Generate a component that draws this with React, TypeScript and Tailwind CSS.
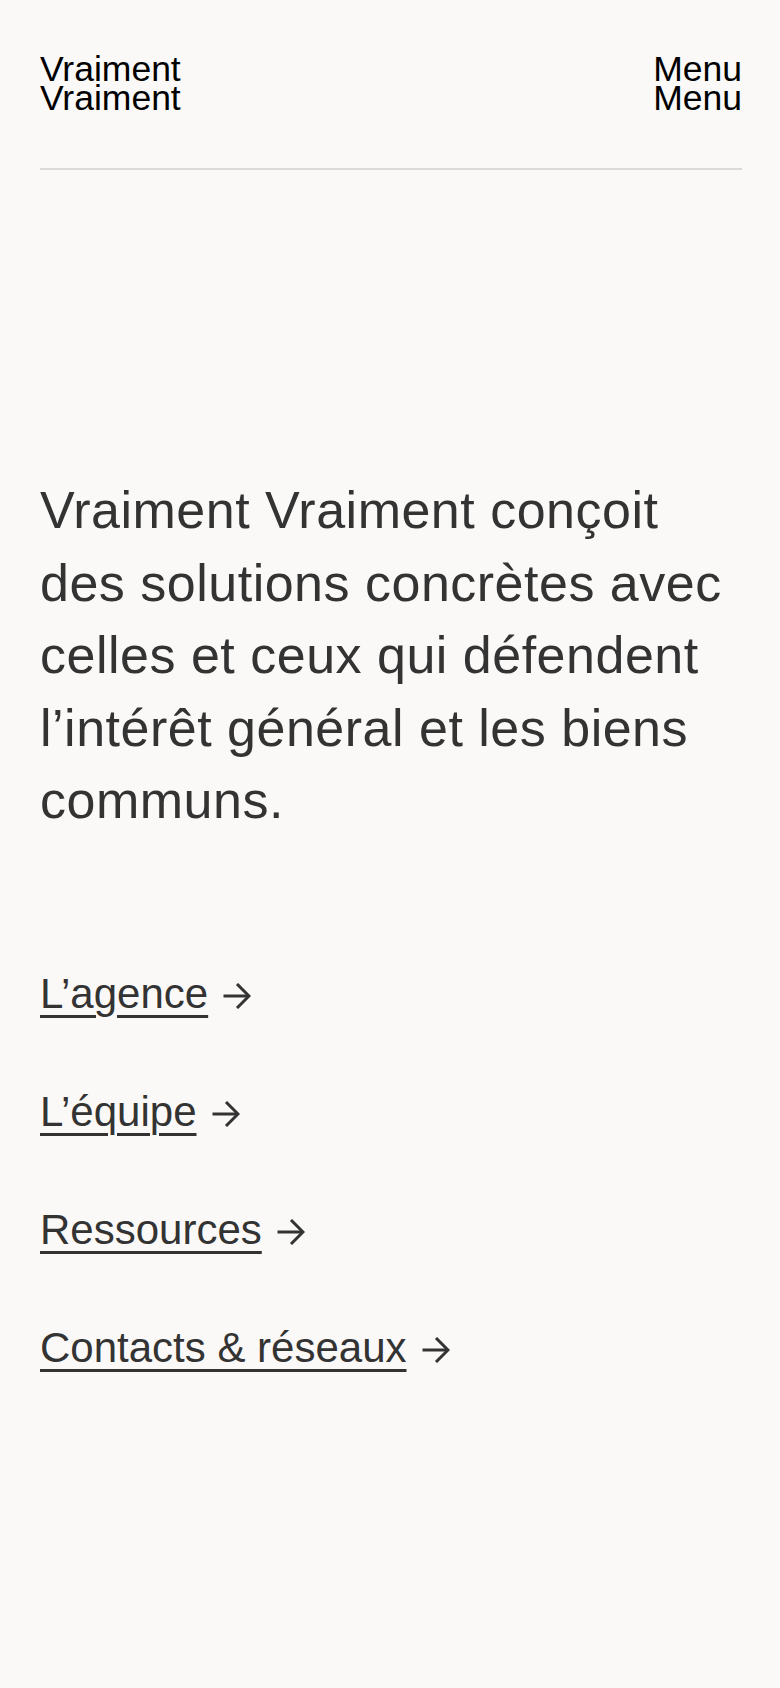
import React from 'react';

const links = ['L’agence', 'L’équipe', 'Ressources', 'Contacts & réseaux'];

const Arrow: React.FC = () => (
  <svg width="28" height="26" viewBox="0 0 28 26" fill="none" className="translate-y-[2px] shrink-0">
    <path d="M0.5 13H26" stroke="#333333" strokeWidth="3" />
    <path d="M14 1L26 13L14 25" stroke="#333333" strokeWidth="3" />
  </svg>
);

const App: React.FC = () => {
  return (
    <div className="min-h-screen bg-[#faf9f7] font-['Liberation_Sans',Arial,sans-serif] text-[#333333]">
      {/* Header */}
      <header className="pt-[55px] pl-10 pr-[38px]">
        <div className="flex justify-between h-[58px] text-[35.5px] leading-[29px] text-black">
          <a href="#" className="block">
            Vraiment
            <br />
            Vraiment
          </a>
          <button className="block text-right">
            Menu
            <br />
            Menu
          </button>
        </div>
        <div className="mt-[55px] h-[2px] bg-[#dcdad7]"></div>
      </header>

      <main className="pl-10 pr-[38px] pb-20">
        {/* Intro */}
        <p className="mt-[304px] text-[52px] leading-[72.5px] tracking-[0.5px]">
          Vraiment Vraiment conçoit des solutions concrètes avec celles et ceux qui défendent l’intérêt général et les
          biens communs.
        </p>

        {/* Links */}
        <nav className="mt-[132px] flex flex-col gap-[68.3px]">
          {links.map((label) => (
            <a key={label} href="#" className="flex items-center gap-[15px] text-[42px] leading-[50px]">
              <span className="underline decoration-[3px] underline-offset-[7px]">{label}</span>
              <Arrow />
            </a>
          ))}
        </nav>
      </main>
    </div>
  );
};

export default App;
